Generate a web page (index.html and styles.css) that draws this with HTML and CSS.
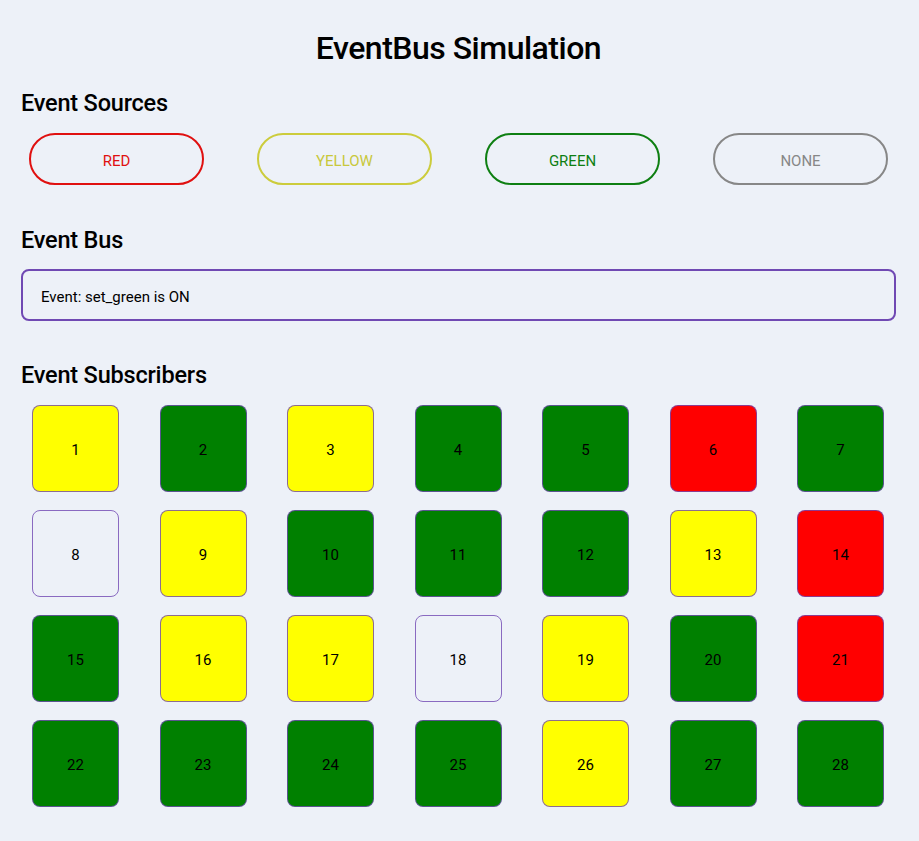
FILE: index.html
```html
<!DOCTYPE html>
<html>
<head>
<meta charset="utf-8">
<link rel="stylesheet" href="styles.css">
</head>
<body>
<div class="page">
  <h1 class="title">EventBus Simulation</h1>
  <h2 class="section-title">Event Sources</h2>
  <div class="sources">
    <button class="src src-red">RED</button>
    <button class="src src-yellow">YELLOW</button>
    <button class="src src-green">GREEN</button>
    <button class="src src-none">NONE</button>
  </div>
  <h2 class="section-title">Event Bus</h2>
  <div class="bus">Event: set_green is ON</div>
  <h2 class="section-title">Event Subscribers</h2>
  <div class="subs">
    <div class="cell c-yellow">1</div>
    <div class="cell c-green">2</div>
    <div class="cell c-yellow">3</div>
    <div class="cell c-green">4</div>
    <div class="cell c-green">5</div>
    <div class="cell c-red">6</div>
    <div class="cell c-green">7</div>
    <div class="cell c-none">8</div>
    <div class="cell c-yellow">9</div>
    <div class="cell c-green">10</div>
    <div class="cell c-green">11</div>
    <div class="cell c-green">12</div>
    <div class="cell c-yellow">13</div>
    <div class="cell c-red">14</div>
    <div class="cell c-green">15</div>
    <div class="cell c-yellow">16</div>
    <div class="cell c-yellow">17</div>
    <div class="cell c-none">18</div>
    <div class="cell c-yellow">19</div>
    <div class="cell c-green">20</div>
    <div class="cell c-red">21</div>
    <div class="cell c-green">22</div>
    <div class="cell c-green">23</div>
    <div class="cell c-green">24</div>
    <div class="cell c-green">25</div>
    <div class="cell c-yellow">26</div>
    <div class="cell c-green">27</div>
    <div class="cell c-green">28</div>
  </div>
</div>
</body>
</html>
```

FILE: styles.css
```css
html, body {
  margin: 0;
  padding: 0;
  background: #edf1f8;
}
body {
  font-family: "Roboto", "Liberation Sans", sans-serif;
  color: #000;
}
.page {
  padding: 0 23px 0 21px;
}
.title {
  margin: 0;
  padding-top: 28px;
  height: 40px;
  line-height: 40px;
  font-size: 32px;
  font-weight: 500;
  text-align: center;
  letter-spacing: -0.5px;
}
.section-title {
  margin: 0;
  font-size: 23.5px;
  font-weight: 500;
  line-height: 30px;
  letter-spacing: -0.2px;
}
.title + .section-title {
  margin-top: 20px;
}
.sources {
  display: flex;
  justify-content: space-between;
  padding: 15px 8px 0 8px;
}
.src {
  width: 175px;
  height: 52px;
  border-radius: 26px;
  border: 2px solid;
  background: transparent;
  font-family: "Roboto", "Liberation Sans", sans-serif;
  font-size: 15px;
  padding: 3px 0 0 0;
}
.src-red { border-color: #e01010; color: #e01010; }
.src-yellow { border-color: #cccc3c; color: #c8c83c; }
.src-green { border-color: #0e7f12; color: #0e7f12; }
.src-none { border-color: #878787; color: #878787; }
.sources + .section-title {
  margin-top: 40px;
}
.bus {
  margin-top: 14px;
  box-sizing: border-box;
  height: 52px;
  border: 2px solid #7049b3;
  border-radius: 8px;
  padding: 3px 18px 0 18px;
  display: flex;
  align-items: center;
  font-size: 15px;
}
.bus + .section-title {
  margin-top: 39px;
}
.subs {
  margin-top: 15px;
  display: grid;
  grid-template-columns: repeat(7, 87px);
  justify-content: space-between;
  row-gap: 18px;
  padding: 0 12px 0 11px;
}
.cell {
  box-sizing: border-box;
  width: 87px;
  height: 87px;
  border: 1px solid rgba(112, 73, 179, 0.8);
  border-radius: 8px;
  display: flex;
  align-items: center;
  justify-content: center;
  padding-top: 3px;
  font-size: 15px;
}
.c-yellow { background: #ffff00; }
.c-green { background: #008000; }
.c-red { background: #ff0000; }
.c-none { background: transparent; }
```
